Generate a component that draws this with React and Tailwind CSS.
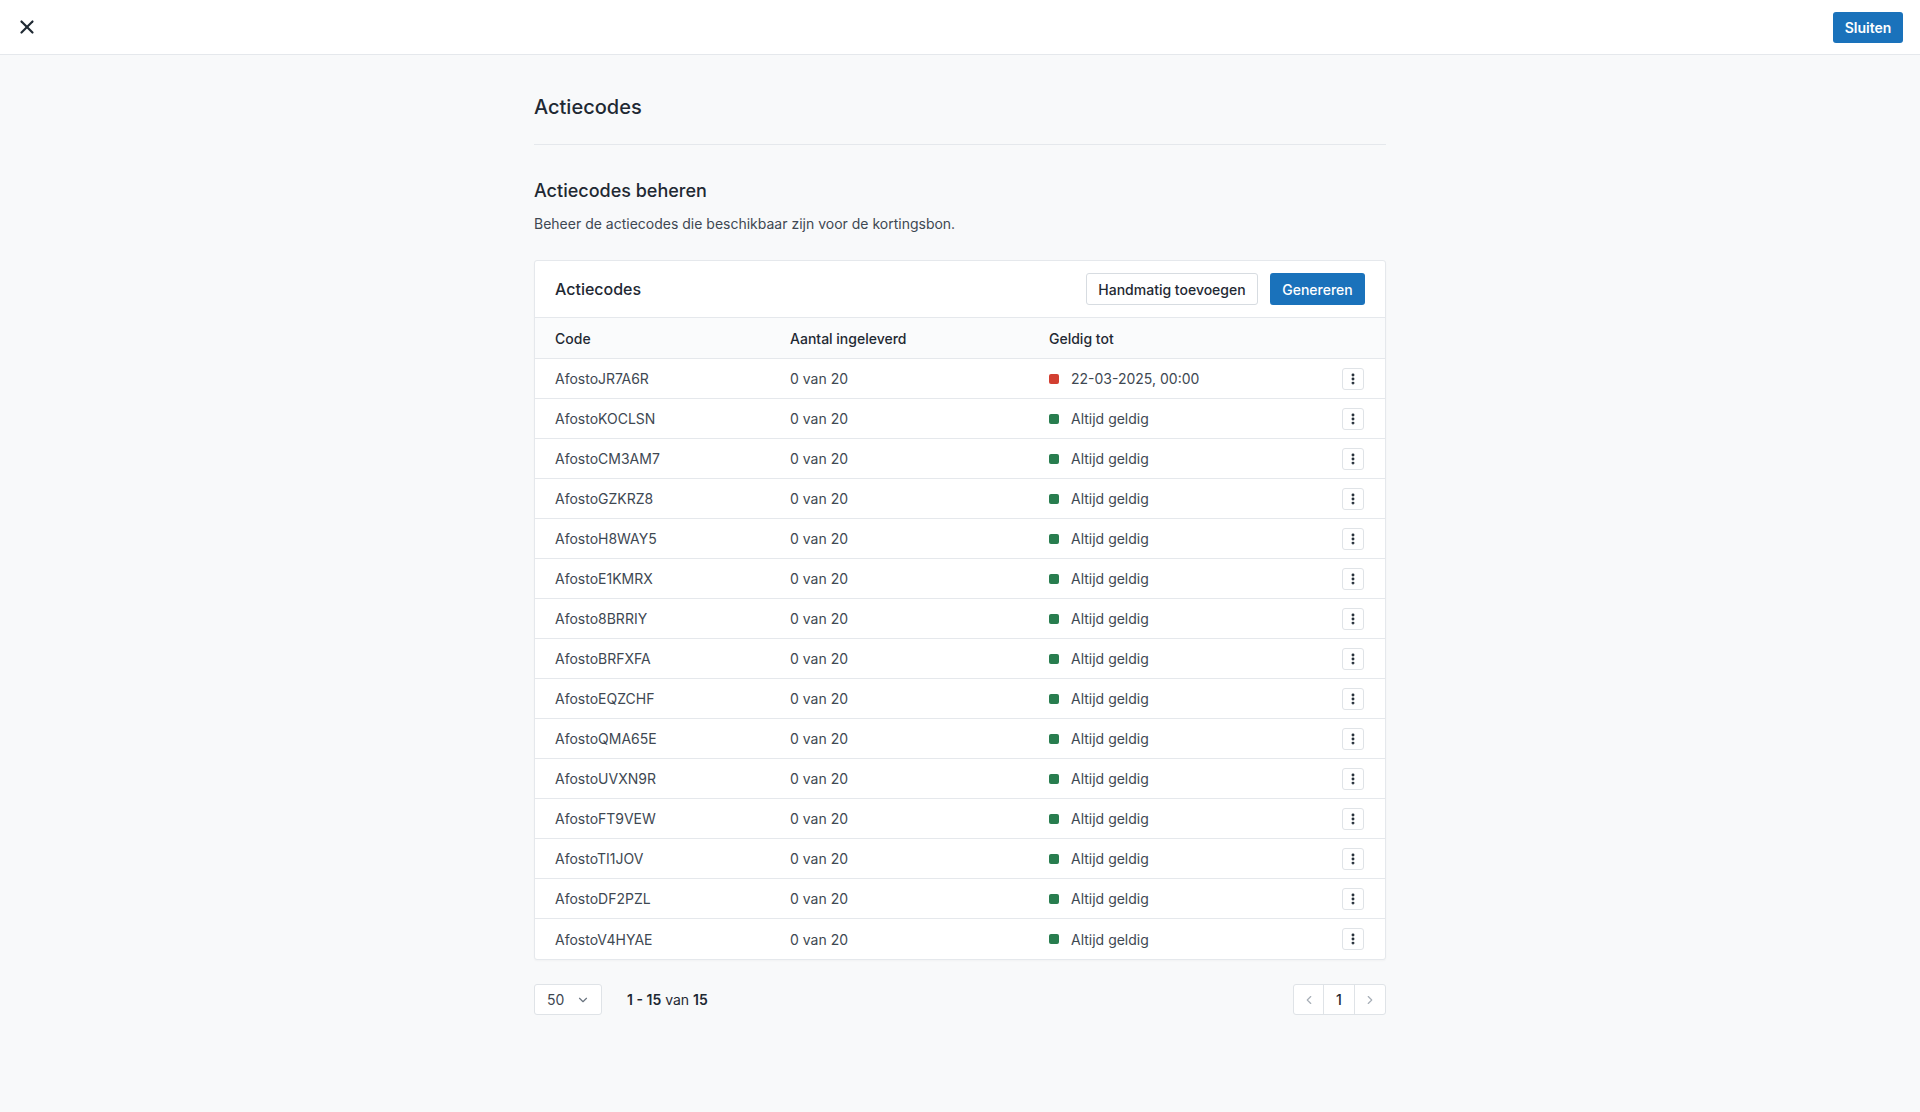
import { X, ChevronDown, ChevronLeft, ChevronRight, EllipsisVertical } from 'lucide-react';

const codes = [
  ['AfostoJR7A6R', '22-03-2025, 00:00', true],
  ['AfostoKOCLSN', 'Altijd geldig'],
  ['AfostoCM3AM7', 'Altijd geldig'],
  ['AfostoGZKRZ8', 'Altijd geldig'],
  ['AfostoH8WAY5', 'Altijd geldig'],
  ['AfostoE1KMRX', 'Altijd geldig'],
  ['Afosto8BRRIY', 'Altijd geldig'],
  ['AfostoBRFXFA', 'Altijd geldig'],
  ['AfostoEQZCHF', 'Altijd geldig'],
  ['AfostoQMA65E', 'Altijd geldig'],
  ['AfostoUVXN9R', 'Altijd geldig'],
  ['AfostoFT9VEW', 'Altijd geldig'],
  ['AfostoTI1JOV', 'Altijd geldig'],
  ['AfostoDF2PZL', 'Altijd geldig'],
  ['AfostoV4HYAE', 'Altijd geldig'],
];

export default function App() {
  return (
    <div className="min-h-screen bg-[#f8f9fa] text-[#1f2933]" style={{ fontFamily: 'Inter, "Noto Sans", sans-serif' }}>
      {/* Top bar */}
      <div className="h-[55px] bg-white border-b border-[#e5e8ec] flex items-center justify-between pl-[16px] pr-[17px]">
        <button className="w-[22px] h-[22px] flex items-center justify-center text-[#1f2933]">
          <X size={22} strokeWidth={2.4} />
        </button>
        <button className="h-[31px] w-[70px] rounded-[3px] bg-[#1a72bb] text-white text-[14px] font-semibold">
          Sluiten
        </button>
      </div>

      <div className="w-[852px] mx-auto pt-[38px] pb-16">
        <h1 className="text-[20px] leading-[28px] font-medium">Actiecodes</h1>
        <div className="mt-[23px] border-t border-[#e5e8ec]" />

        <h2 className="mt-[32px] text-[18px] leading-[28px] font-medium">Actiecodes beheren</h2>
        <p className="mt-[9px] text-[14px] leading-[20px] text-[#3e4852]">
          Beheer de actiecodes die beschikbaar zijn voor de kortingsbon.
        </p>

        {/* Card */}
        <div className="mt-[26px] bg-white border border-[#e5e8ec] rounded-[3px] shadow-[0_1px_2px_rgba(0,0,0,0.03)]">
          <div className="h-[57px] px-5 flex items-center justify-between border-b border-[#e5e8ec]">
            <span className="text-[16px] font-medium">Actiecodes</span>
            <div className="flex items-center gap-[12px]">
              <button className="h-[32px] w-[172px] rounded-[3px] border border-[#d7dce1] bg-white text-[14px] font-medium text-[#1f2933]">
                Handmatig toevoegen
              </button>
              <button className="h-[32px] w-[95px] rounded-[3px] bg-[#1a72bb] text-white text-[14px] font-medium">
                Genereren
              </button>
            </div>
          </div>

          <div className="h-[41px] px-5 grid grid-cols-[235px_259px_1fr_22px] items-center bg-[#fafbfc] border-b border-[#e5e8ec] text-[14px] font-medium">
            <span>Code</span>
            <span>Aantal ingeleverd</span>
            <span>Geldig tot</span>
            <span />
          </div>

          {codes.map(([code, valid, expired], i) => (
            <div
              key={code}
              className={`h-10 px-5 grid grid-cols-[235px_259px_1fr_22px] items-center text-[14px] text-[#3e4852] ${i < codes.length - 1 ? 'border-b border-[#e5e8ec]' : ''}`}
            >
              <span>{code}</span>
              <span>0 van 20</span>
              <span className="flex items-center">
                <span className={`w-[10px] h-[10px] rounded-[2px] mr-[12px] ${expired ? 'bg-[#d23f31]' : 'bg-[#287d4f]'}`} />
                {valid}
              </span>
              <button className="w-[22px] h-[22px] -ml-px rounded-[3px] border border-[#dfe3e7] bg-white flex items-center justify-center text-[#1f2933]">
                <EllipsisVertical size={14} strokeWidth={3} />
              </button>
            </div>
          ))}
        </div>

        {/* Pagination */}
        <div className="mt-[24px] flex items-center justify-between">
          <div className="flex items-center">
            <div className="h-[31px] w-[68px] bg-white border border-[#dfe3e7] rounded-[3px] flex items-center pl-[12px] gap-[12px] text-[14px] text-[#3e4852]">
              <span>50</span>
              <ChevronDown size={14} className="text-[#6b7580]" />
            </div>
            <span className="ml-[25px] text-[14px] text-[#1f2933]">
              <span className="font-semibold">1 - 15</span> van <span className="font-semibold">15</span>
            </span>
          </div>
          <div className="flex h-[31px] bg-white border border-[#dfe3e7] rounded-[3px] text-[14px]">
            <button className="w-[30px] flex items-center justify-center border-r border-[#dfe3e7] text-[#a7afb7]">
              <ChevronLeft size={14} />
            </button>
            <span className="w-[31px] flex items-center justify-center border-r border-[#dfe3e7] font-medium">1</span>
            <button className="w-[30px] flex items-center justify-center text-[#a7afb7]">
              <ChevronRight size={14} />
            </button>
          </div>
        </div>
      </div>
    </div>
  );
}
